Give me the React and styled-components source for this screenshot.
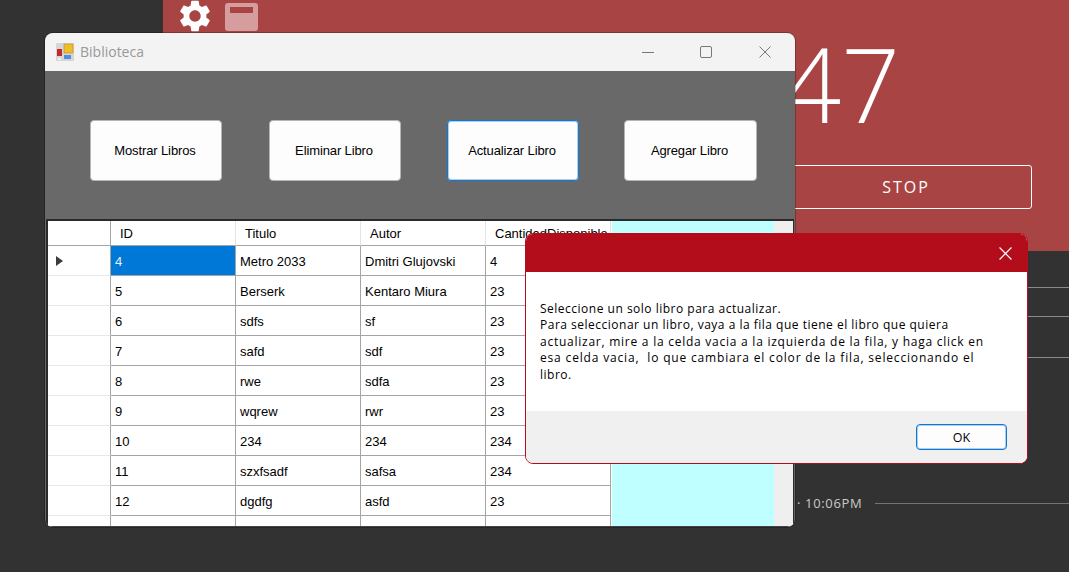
import React from 'react';
import styled, { createGlobalStyle } from 'styled-components';

const Global = createGlobalStyle`
  html, body { margin: 0; padding: 0; background: #323232; }
  * { box-sizing: border-box; }
`;

const Desktop = styled.div`
  position: relative; width: 1069px; height: 572px; overflow: hidden;
  background: #323232; font-family: "Liberation Sans", Arial, sans-serif;
`;

/* background app */
const BackApp = styled.div`
  position: absolute; inset: 0 0 0 163px; display: flex; flex-direction: column;
`;
const RedPanel = styled.section`
  position: relative; height: 251px; background: #a94444; color: #fff;
  font-family: "Open Sans", sans-serif; display: flex; flex-direction: column; align-items: flex-end;
  padding-right: 37px;
`;
const Toolbar = styled.div`
  position: absolute; left: 13px; top: 0; display: flex; align-items: flex-start; gap: 11px;
`;
const GearIcon = styled.svg` width: 38px; height: 38px; margin-top: -3px; display: block; `;
const PanelIcon = styled.div`
  width: 33px; height: 28px; margin-top: 3px; border-radius: 3px; background: #d59d9d; padding: 4px 5px;
  &::before { content: ""; display: block; height: 6px; background: #a94444; }
`;
const Timer = styled.div`
  font-size: 103px; font-weight: 300; line-height: 100px; margin: 33px 132px 0 0; height: 100px;
`;
const StopButton = styled.div`
  width: 252px; height: 44px; margin-top: 32px; border: 1px solid #fff; border-radius: 3px;
  display: flex; align-items: center; justify-content: center;
  font-size: 16px; letter-spacing: 2px;
`;
const BackList = styled.div` display: flex; flex-direction: column; flex: 1; `;
const ListLine = styled.div`
  height: ${p => p.$h}px; border-bottom: 1px solid #8a8a8a; margin-left: 820px;
`;
const TimeRow = styled.div`
  display: flex; align-items: center; gap: 13px; margin-top: 136px; padding-left: 634px;
  font-family: "Open Sans", sans-serif; font-size: 13px; letter-spacing: .65px; color: #c9c9c9;
`;
const TimeRule = styled.div` flex: 1; height: 1px; background: #757575; `;

/* main window */
const MainWindow = styled.section`
  position: absolute; left: 45px; top: 33px; width: 750px; height: 494px;
  display: flex; flex-direction: column; overflow: hidden; background: #696969;
  border-radius: 8px; box-shadow: 0 0 0 1px rgba(0,0,0,.25);
`;
const TitleBar = styled.header`
  height: 38px; flex: none; background: #f3f3f3; display: flex; align-items: center; padding-left: 11px;
`;
const AppIcon = styled.svg` width: 18px; height: 18px; display: block; margin-right: 6px; `;
const TitleText = styled.span`
  font-family: "Open Sans", sans-serif; font-size: 14px; color: #999; flex: 1; margin-top: -2px;
`;
const WinControl = styled.svg`
  width: 12px; height: 12px; margin-right: ${p => p.$mr}px; display: block; flex: none;
`;
const ActionBar = styled.div`
  height: 148px; flex: none; background: #696969; display: flex; align-items: center;
  padding: 11px 0 0 45px;
`;
const ActionButton = styled.button`
  width: 132px; height: 61px; padding: 0 2px 0 0; background: #fdfdfd; border-radius: 4px; color: #000;
  margin-right: ${p => p.$gap}px;
  border: 1px solid ${p => (p.$focused ? '#0f78d4' : '#b5b5b5')};
  box-shadow: ${p => (p.$focused ? 'inset 0 0 0 1px rgba(15,120,212,.35)' : 'none')};
  font-family: "Liberation Sans", Arial, sans-serif; font-size: 13px; letter-spacing: -.12px;
  &:last-child { width: 133px; }
`;
const GridFrame = styled.div`
  flex: 1; display: flex; background: #efefef; margin: 0 1px;
  border: 2px solid #2a2a2a; border-bottom: 1px solid #444; border-right-width: 1px; overflow: hidden; min-height: 0;
`;
const Table = styled.div` width: 564px; flex: none; display: flex; flex-direction: column; background: #fff; `;
const Row = styled.div`
  display: grid; grid-template-columns: 63px repeat(4, 125px); height: ${p => (p.$head ? 25 : 30)}px; flex: none;
`;
const Cell = styled.div`
  border-right: 1px solid #a4a4a4; border-bottom: 1px solid #a4a4a4; padding: 1px 0 0 4px;
  display: flex; align-items: center; font-size: 13px; color: #000; white-space: nowrap; overflow: hidden;
  ${p => p.$selected && 'background: #0078d7; color: #e6f2fb;'}
`;
const HeadCell = styled.div`
  border-right: 1px solid #e4e4e4; border-bottom: 1px solid #a4a4a4; padding: 1px 0 0 9px;
  display: flex; align-items: center; font-size: 13px; color: #000; white-space: nowrap; overflow: hidden;
`;
const RowHead = styled.div`
  border-right: 1px solid #a4a4a4; border-bottom: 1px solid #e8e8e8; display: flex; align-items: center; padding-left: 8px;
  ${p => p.$top && 'border-bottom-color: #a4a4a4;'}
`;
const Arrow = styled.span`
  width: 0; height: 0; border-left: 7px solid #3c3c3c; border-top: 5.5px solid transparent; border-bottom: 5.5px solid transparent;
`;
const EmptyArea = styled.div` width: 162px; flex: none; background: #c0ffff; `;

/* dialog */
const Dialog = styled.section`
  position: absolute; left: 525px; top: 233px; width: 503px; height: 231px;
  display: flex; flex-direction: column; overflow: hidden; background: #fff;
  border: 1px solid #b30d1c; border-radius: 8px;
`;
const DialogHeader = styled.header`
  height: 38px; flex: none; background: #b30d1c; display: flex; align-items: center; justify-content: flex-end; padding: 0 15px 0 0;
`;
const DialogClose = styled.svg` width: 13px; height: 13px; display: block; `;
const DialogBody = styled.div`
  flex: 1; padding: 29px 0 0 14px; font-family: "Open Sans", sans-serif; font-size: 12px; font-weight: 500;
  line-height: 16.4px; color: #000;
`;
const MessageLine = styled.div`
  white-space: pre; letter-spacing: ${p => p.$track}px;
`;
const DialogFooter = styled.footer`
  height: 52px; flex: none; background: #f0f0f0; display: flex; align-items: center; justify-content: flex-end; padding-right: 20px;
`;
const OkButton = styled.button`
  width: 91px; height: 26px; background: #fdfdfd; border: 1px solid #0f78d4; border-radius: 4px; padding: 0;
  box-shadow: inset 0 0 0 1px rgba(15,120,212,.35);
  font-family: "Open Sans", sans-serif; font-size: 12.5px; font-weight: 500; color: #000;
`;

const books = [
  ['4', 'Metro 2033', 'Dmitri Glujovski', '4'],
  ['5', 'Berserk', 'Kentaro Miura', '23'],
  ['6', 'sdfs', 'sf', '23'],
  ['7', 'safd', 'sdf', '23'],
  ['8', 'rwe', 'sdfa', '23'],
  ['9', 'wqrew', 'rwr', '23'],
  ['10', '234', '234', '234'],
  ['11', 'szxfsadf', 'safsa', '234'],
  ['12', 'dgdfg', 'asfd', '23'],
  ['13', 'asdfas', 'asdf', '125'],
];

const actions = [
  ['Mostrar Libros', 47],
  ['Eliminar Libro', 46],
  ['Actualizar Libro', 45],
  ['Agregar Libro', 0],
];
const heads = ['ID', 'Titulo', 'Autor', 'CantidadDisponible'];
const message = [
  ['Seleccione un solo libro para actualizar.', 0.5],
  ['Para seleccionar un libro, vaya a la fila que tiene el libro que quiera', 0.5],
  ['actualizar, mire a la celda vacia a la izquierda de la fila, y haga click en', 0.75],
  ['esa celda vacia,  lo que cambiara el color de la fila, seleccionando el', 0.83],
  ['libro.', 0.5],
];

export default function App() {
  return (
    <Desktop>
      <Global />
      <BackApp>
        <RedPanel>
          <Toolbar>
            <GearIcon viewBox="0 0 24 24" fill="#fff">
              <path d="M19.14 12.94c.04-.3.06-.61.06-.94 0-.32-.02-.64-.07-.94l2.03-1.58a.49.49 0 0 0 .12-.61l-1.92-3.32a.488.488 0 0 0-.59-.22l-2.39.96c-.5-.38-1.03-.7-1.62-.94l-.36-2.54a.484.484 0 0 0-.48-.41h-3.84c-.24 0-.43.17-.47.41l-.36 2.54c-.59.24-1.13.57-1.62.94l-2.39-.96c-.22-.08-.47 0-.59.22L2.74 8.87c-.12.21-.08.47.12.61l2.03 1.58c-.05.3-.09.63-.09.94s.02.64.07.94l-2.03 1.58a.49.49 0 0 0-.12.61l1.92 3.32c.12.22.37.29.59.22l2.39-.96c.5.38 1.03.7 1.62.94l.36 2.54c.05.24.24.41.48.41h3.84c.24 0 .44-.17.47-.41l.36-2.54c.59-.24 1.13-.56 1.62-.94l2.39.96c.22.08.47 0 .59-.22l1.92-3.32c.12-.22.07-.47-.12-.61l-2.01-1.58zM12 15.6c-1.98 0-3.6-1.62-3.6-3.6s1.62-3.6 3.6-3.6 3.6 1.62 3.6 3.6-1.62 3.6-3.6 3.6z" />
            </GearIcon>
            <PanelIcon />
          </Toolbar>
          <Timer>47</Timer>
          <StopButton>STOP</StopButton>
        </RedPanel>
        <BackList>
          <ListLine $h={37} />
          <ListLine $h={29} />
          <ListLine $h={41} />
          <TimeRow>
            <span>· 10:06PM</span>
            <TimeRule />
          </TimeRow>
        </BackList>
      </BackApp>

      <MainWindow>
        <TitleBar>
          <AppIcon viewBox="0 0 18 18">
            <rect x="0" y="0" width="18" height="18" rx="1" fill="#d6d6d6" />
            <rect x="8" y="1" width="9" height="9" fill="#f2bd2c" stroke="#b98a12" strokeWidth=".6" />
            <rect x="1" y="6" width="5" height="7" fill="#c8282a" />
            <rect x="8" y="12" width="7" height="4" fill="#4f8fe0" />
            <rect x="2" y="15" width="3" height="2" fill="#f2f2f2" />
          </AppIcon>
          <TitleText>Biblioteca</TitleText>
          <WinControl $mr={46} viewBox="0 0 12 12"><path d="M0 6.5h12" stroke="#777" fill="none" /></WinControl>
          <WinControl $mr={47} viewBox="0 0 12 12"><rect x=".5" y=".5" width="11" height="11" rx="1.5" stroke="#777" fill="none" /></WinControl>
          <WinControl $mr={24} viewBox="0 0 12 12"><path d="M.5.5l11 11M11.5.5l-11 11" stroke="#777" fill="none" /></WinControl>
        </TitleBar>
        <ActionBar>
          {actions.map(([label, gap], i) => (
            <ActionButton key={label} $gap={gap} $focused={i === 2}>{label}</ActionButton>
          ))}
        </ActionBar>
        <GridFrame>
          <Table>
            <Row $head>
              <RowHead $top />
              {heads.map(h => <HeadCell key={h}>{h}</HeadCell>)}
            </Row>
            {books.map((b, i) => (
              <Row key={b[0]}>
                <RowHead>{i === 0 && <Arrow />}</RowHead>
                {b.map((c, j) => (
                  <Cell key={j} $selected={i === 0 && j === 0}>{c}</Cell>
                ))}
              </Row>
            ))}
          </Table>
          <EmptyArea />
        </GridFrame>
      </MainWindow>

      <Dialog>
        <DialogHeader>
          <DialogClose viewBox="0 0 12 12"><path d="M.5.5l11 11M11.5.5l-11 11" stroke="#fff" strokeWidth="1.1" fill="none" /></DialogClose>
        </DialogHeader>
        <DialogBody>
          {message.map(([text, track]) => (
            <MessageLine key={text} $track={track}>{text}</MessageLine>
          ))}
        </DialogBody>
        <DialogFooter>
          <OkButton>OK</OkButton>
        </DialogFooter>
      </Dialog>
    </Desktop>
  );
}
